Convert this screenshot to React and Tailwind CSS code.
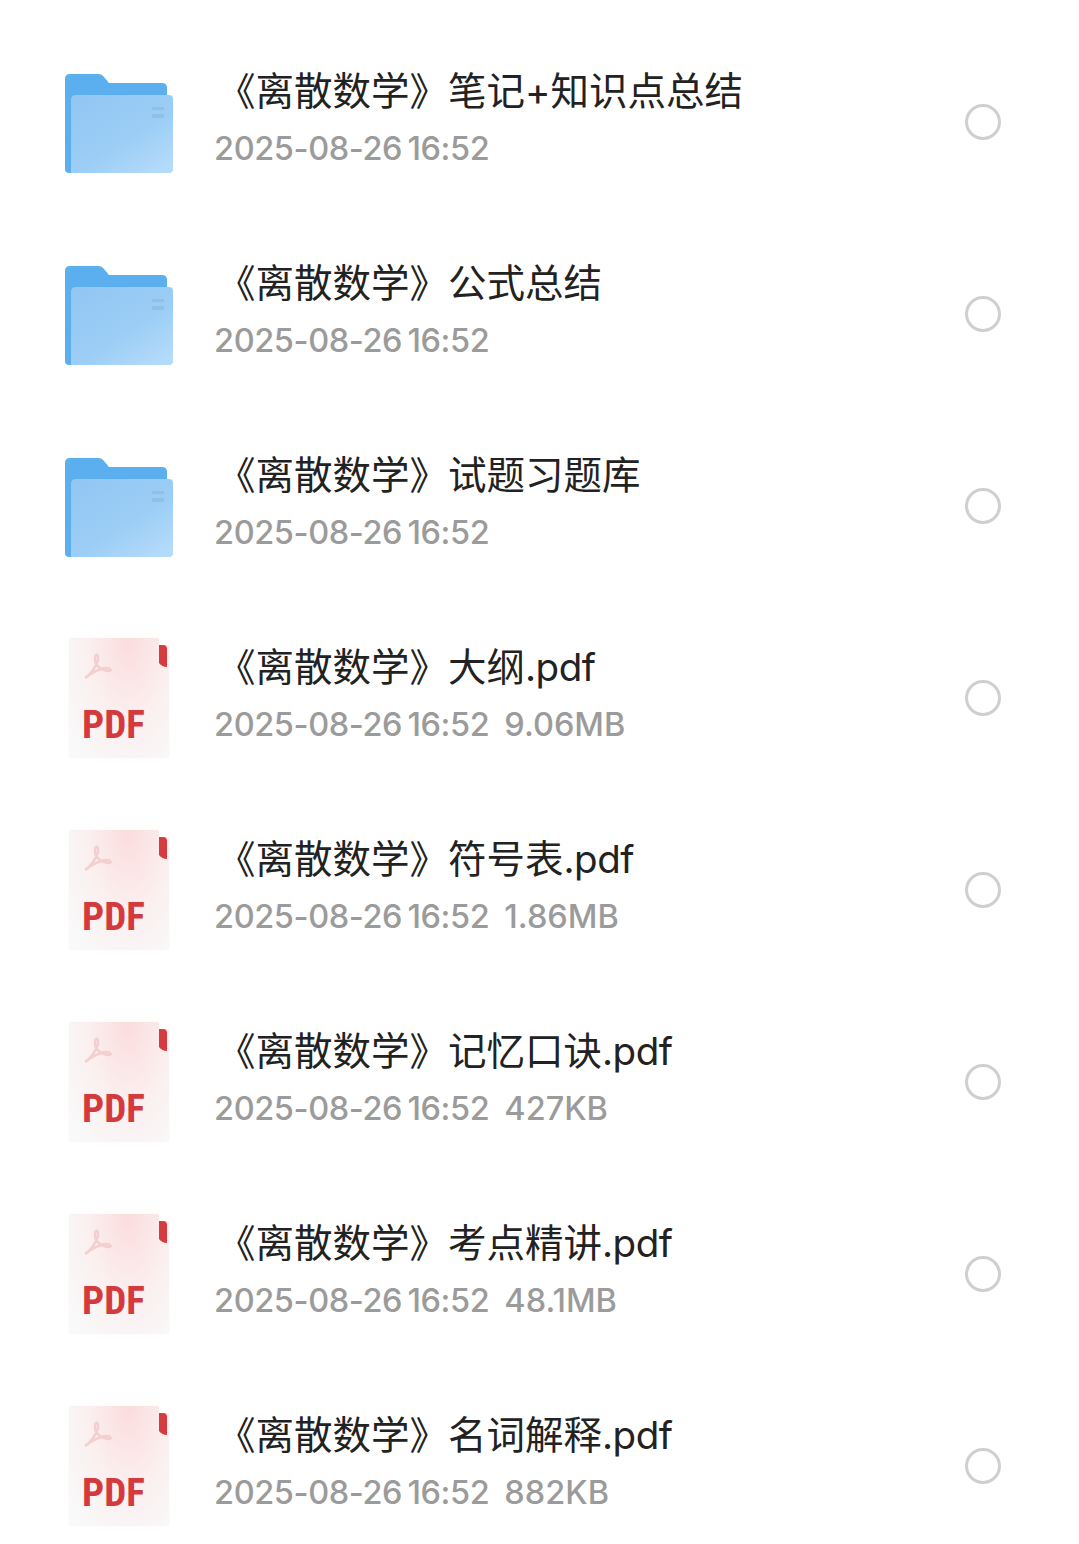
const rows = [
  { type: 'folder', name: '《离散数学》笔记+知识点总结', ext: '', size: '' },
  { type: 'folder', name: '《离散数学》公式总结', ext: '', size: '' },
  { type: 'folder', name: '《离散数学》试题习题库', ext: '', size: '' },
  { type: 'pdf', name: '《离散数学》大纲', ext: '.pdf', size: '9.06MB' },
  { type: 'pdf', name: '《离散数学》符号表', ext: '.pdf', size: '1.86MB' },
  { type: 'pdf', name: '《离散数学》记忆口诀', ext: '.pdf', size: '427KB' },
  { type: 'pdf', name: '《离散数学》考点精讲', ext: '.pdf', size: '48.1MB' },
  { type: 'pdf', name: '《离散数学》名词解释', ext: '.pdf', size: '882KB' },
];

const FolderIcon = ({ id }) => (
  <svg width="108" height="99" viewBox="0 0 108 99" className="block mt-[2px]">
    <defs>
      <linearGradient id={id} x1="0.1" y1="0" x2="0.9" y2="1">
        <stop offset="0" stopColor="#93c7f3" />
        <stop offset="0.55" stopColor="#9bcdf5" />
        <stop offset="1" stopColor="#b5dbfb" />
      </linearGradient>
    </defs>
    <path d="M0 5 Q0 0 5 0 H33 Q37 0 39 3 L44 9 H97 Q102 9 102 14 V30 H8 V99 H4 Q0 99 0 95 Z" fill="#5cafee" />
    <path d="M6 26 Q6 21 11 21 H104 Q108 21 108 25 V95 Q108 99 104 99 H6 Z" fill={`url(#${id})`} />
    <rect x="87" y="33" width="12" height="3" fill="#8fc0ea" />
    <rect x="87" y="40" width="12" height="4" fill="#8fc0ea" />
  </svg>
);

const PdfIcon = () => (
  <div className="relative w-[100px] h-[120px] rounded-[3px] bg-[radial-gradient(ellipse_at_60%_0%,#fbdcdc,#fbf0f0_50%,#f9f9f9_90%)] shadow-[0_0_2px_rgba(0,0,0,0.05)]">
    <div className="absolute top-0 right-0 w-[10px] h-[7px] bg-white" />
    <svg width="100" height="120" viewBox="0 0 100 120" className="absolute inset-0">
      <path
        d="M16 40 C22 36 27 28 29 22 C30 15 26 15 26 21 C26 28 33 33 40 33 C43 33 42 30 38 30 C32 30 22 35 16 40 Z"
        fill="none"
        stroke="#f4cfd0"
        strokeWidth="2.5"
      />
      <path d="M90 7 H94 Q98 7 98 11 V29 Q93 29 90 25 Z" fill="#d53c3f" />
    </svg>
    <span className="absolute left-[13px] top-[63px] text-[39px] leading-[48px] font-bold text-[#d43a3d] [font-family:'Liberation_Sans_Narrow','Roboto_Condensed','Liberation_Sans',sans-serif]">
      PDF
    </span>
  </div>
);

const Row = ({ row, index }) => (
  <div className="flex items-center h-[192px] pl-[65px] pr-[78px]">
    <div className="w-[108px] flex justify-center shrink-0">
      {row.type === 'folder' ? <FolderIcon id={`folder-${index}`} /> : <PdfIcon />}
    </div>
    <div className="flex-1 ml-[42px] pb-[10px] flex flex-col">
      <div className="pl-[2px] text-[38.5px] leading-[50px] text-[#222] [font-family:Inter,'Noto_Sans_CJK_SC',sans-serif]">
        {row.name}
        {row.ext && <span className="tracking-[-0.5px]">{row.ext}</span>}
      </div>
      <div className="mt-[13px] -ml-[1px] text-[32.5px] leading-[40px] font-[450] text-[#9b9b9b] flex gap-[15px] [font-family:Inter,'Noto_Sans_CJK_SC',sans-serif]">
        <span className="tracking-[-0.4px] [word-spacing:-3px]">2025-08-26 16:52</span>
        {row.size && <span>{row.size}</span>}
      </div>
    </div>
    <div className="w-[36px] h-[36px] rounded-full border-[3px] border-[#cfcfcf] shrink-0" />
  </div>
);

export default function App() {
  return (
    <div className="h-[1544px] overflow-hidden bg-white pt-[26px]">
      {rows.map((row, i) => (
        <Row key={i} row={row} index={i} />
      ))}
    </div>
  );
}
